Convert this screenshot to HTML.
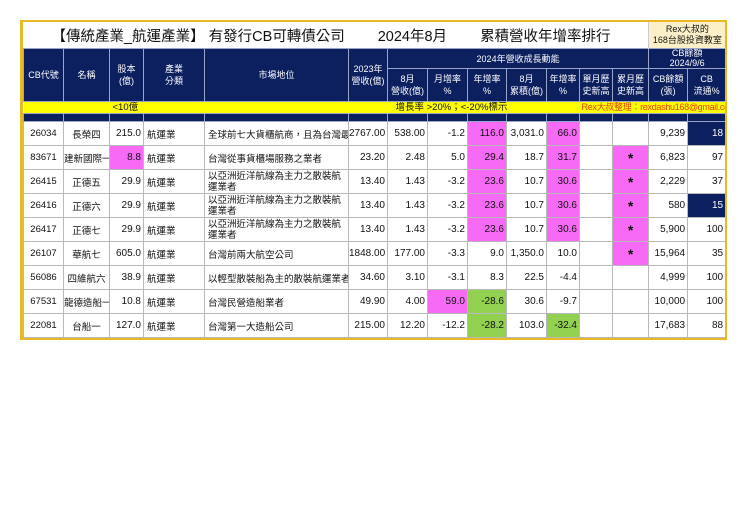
<!DOCTYPE html>
<html><head><meta charset="utf-8"><style>
body{margin:0;background:#fff;width:740px;height:523px;overflow:hidden;font-family:"Liberation Sans","Noto Sans CJK TC",sans-serif;}
.wrap{position:absolute;left:20px;top:20px;width:702px;height:316px;border:2px solid #e8b923;border-left-width:3px;overflow:hidden;}
table{position:absolute;left:0;top:0;width:702px;border-collapse:collapse;table-layout:fixed;}
td{padding:0;overflow:hidden;white-space:nowrap;font-size:10px;color:#111;}
.h td{background:#0c1f5e;color:#fff;border:1px solid #9aa6c8;text-align:center;font-size:9px;line-height:12px;}
.d td{border:1px solid #b8b8b8;height:23px;text-align:right;padding-right:2px;}
.d td.c{text-align:center;padding:0;font-size:9.5px;}
.d td.l{text-align:left;padding-left:3px;font-size:9.5px;}
.d td.ml{text-align:left;padding-left:3px;line-height:11px;white-space:normal;font-size:9.5px;}
.d td.s{font-size:14px;font-weight:bold;text-align:center;padding:0;}
.p{background:#f76af5;}
.g{background:#92d050;}
.n{background:#0c1f5e;color:#fff!important;}
</style></head><body>
<div class="wrap">
<table>
<colgroup>
<col style="width:40px"><col style="width:46px"><col style="width:34px"><col style="width:61px"><col style="width:144px"><col style="width:39px"><col style="width:40px"><col style="width:40px"><col style="width:39px"><col style="width:40px"><col style="width:33px"><col style="width:33px"><col style="width:36px"><col style="width:39px"><col style="width:38px">
</colgroup>
<tr style="height:26px"><td colspan="13" style="height:26px;font-size:14.5px;padding-left:28px;">【傳統產業_航運產業】 有發行CB可轉債公司<span style="margin-left:33px">2024年8月</span><span style="margin-left:33px">累積營收年增率排行</span></td>
<td colspan="2" style="background:#fbf0c8;text-align:center;font-size:9px;line-height:11px;border-left:1px solid #ccc;">Rex大叔的<br>168台股投資教室</td></tr>
<tr class="h" style="height:20px"><td rowspan="2" style="height:52px">CB代號</td><td rowspan="2">名稱</td><td rowspan="2">股本<br>(億)</td><td rowspan="2">產業<br>分類</td><td rowspan="2">市場地位</td><td rowspan="2">2023年<br>營收(億)</td><td colspan="7" style="height:19px">2024年營收成長動能</td><td colspan="2" style="line-height:9.5px;height:19px">CB餘額<br>2024/9/6</td></tr>
<tr class="h" style="height:32px"><td style="height:31px">8月<br>營收(億)</td><td>月增率<br>%</td><td>年增率<br>%</td><td>8月<br>累積(億)</td><td>年增率<br>%</td><td>單月歷<br>史新高</td><td>累月歷<br>史新高</td><td>CB餘額<br>(張)</td><td>CB<br>流通%</td></tr>
<tr style="height:11px;background:#ffff00;"><td colspan="2" style="height:11px"></td><td colspan="3" style="font-size:9.5px;line-height:11px;padding-left:3px;">&lt;10億</td><td></td><td colspan="5" style="font-size:9.5px;line-height:11px;padding-left:8px;">增長率 &gt;20%；&lt;-20%標示</td><td colspan="4" style="font-size:9px;letter-spacing:-0.3px;line-height:11px;color:#e8400c;padding-left:2px;">Rex大叔整理：rexdashu168@gmail.com</td></tr>
<tr class="h" style="height:8px"><td style="height:7px;line-height:7px"></td><td></td><td></td><td></td><td></td><td></td><td></td><td></td><td></td><td></td><td></td><td></td><td></td><td></td><td></td></tr>
<tr class="d"><td class="c">26034</td><td class="c">長榮四</td><td>215.0</td><td class="l">航運業</td><td class="l">全球前七大貨櫃航商，且為台灣最大</td><td>2767.00</td><td>538.00</td><td>-1.2</td><td class="p">116.0</td><td>3,031.0</td><td class="p">66.0</td><td></td><td></td><td>9,239</td><td class="n">18</td></tr>
<tr class="d"><td class="c">83671</td><td class="c">建新國際一</td><td class="p">8.8</td><td class="l">航運業</td><td class="l">台灣從事貨櫃場服務之業者</td><td>23.20</td><td>2.48</td><td>5.0</td><td class="p">29.4</td><td>18.7</td><td class="p">31.7</td><td></td><td class="s p">*</td><td>6,823</td><td>97</td></tr>
<tr class="d"><td class="c">26415</td><td class="c">正德五</td><td>29.9</td><td class="l">航運業</td><td class="ml">以亞洲近洋航線為主力之散裝航運業者</td><td>13.40</td><td>1.43</td><td>-3.2</td><td class="p">23.6</td><td>10.7</td><td class="p">30.6</td><td></td><td class="s p">*</td><td>2,229</td><td>37</td></tr>
<tr class="d"><td class="c">26416</td><td class="c">正德六</td><td>29.9</td><td class="l">航運業</td><td class="ml">以亞洲近洋航線為主力之散裝航運業者</td><td>13.40</td><td>1.43</td><td>-3.2</td><td class="p">23.6</td><td>10.7</td><td class="p">30.6</td><td></td><td class="s p">*</td><td>580</td><td class="n">15</td></tr>
<tr class="d"><td class="c">26417</td><td class="c">正德七</td><td>29.9</td><td class="l">航運業</td><td class="ml">以亞洲近洋航線為主力之散裝航運業者</td><td>13.40</td><td>1.43</td><td>-3.2</td><td class="p">23.6</td><td>10.7</td><td class="p">30.6</td><td></td><td class="s p">*</td><td>5,900</td><td>100</td></tr>
<tr class="d"><td class="c">26107</td><td class="c">華航七</td><td>605.0</td><td class="l">航運業</td><td class="l">台灣前兩大航空公司</td><td>1848.00</td><td>177.00</td><td>-3.3</td><td>9.0</td><td>1,350.0</td><td>10.0</td><td></td><td class="s p">*</td><td>15,964</td><td>35</td></tr>
<tr class="d"><td class="c">56086</td><td class="c">四維航六</td><td>38.9</td><td class="l">航運業</td><td class="l">以輕型散裝船為主的散裝航運業者</td><td>34.60</td><td>3.10</td><td>-3.1</td><td>8.3</td><td>22.5</td><td>-4.4</td><td></td><td></td><td>4,999</td><td>100</td></tr>
<tr class="d"><td class="c">67531</td><td class="c">龍德造船一</td><td>10.8</td><td class="l">航運業</td><td class="l">台灣民營造船業者</td><td>49.90</td><td>4.00</td><td class="p">59.0</td><td class="g">-28.6</td><td>30.6</td><td>-9.7</td><td></td><td></td><td>10,000</td><td>100</td></tr>
<tr class="d"><td class="c">22081</td><td class="c">台船一</td><td>127.0</td><td class="l">航運業</td><td class="l">台灣第一大造船公司</td><td>215.00</td><td>12.20</td><td>-12.2</td><td class="g">-28.2</td><td>103.0</td><td class="g">-32.4</td><td></td><td></td><td>17,683</td><td>88</td></tr>
</table>
</div>
</body></html>
